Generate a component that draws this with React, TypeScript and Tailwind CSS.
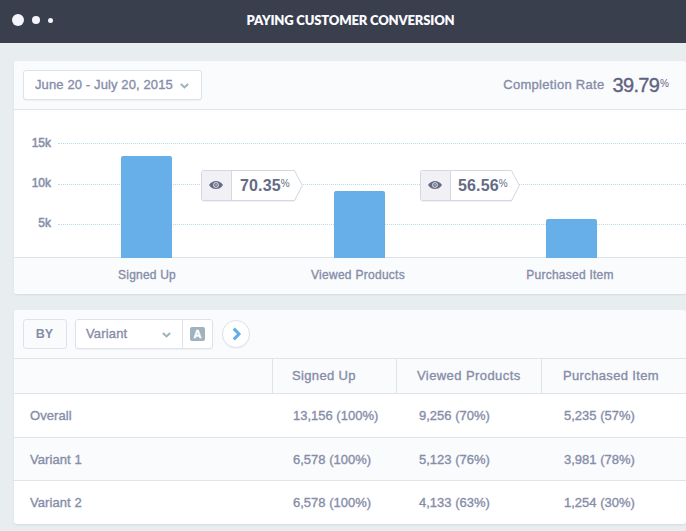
import React from 'react';

const SANS = "font-['Liberation_Sans',Arial,sans-serif]";

function Chevron({ className = '' }: { className?: string }) {
  return (
    <svg width="9" height="6" viewBox="0 0 9 6" className={`shrink-0 ${className}`} fill="none">
      <path d="M0.9 1.1 L4.5 4.4 L8.1 1.1" stroke="#9fb1bd" strokeWidth="2.1" />
    </svg>
  );
}

function Eye() {
  return (
    <svg width="14" height="10" viewBox="0 0 14 10" className="-mt-px">
      <path d="M0 5 C2.2 2 4.4 1 7 1 C9.6 1 11.8 2 14 5 C11.8 8 9.6 9 7 9 C4.4 9 2.2 8 0 5Z" fill="#646b86" />
      <circle cx="7" cy="5" r="2.7" fill="#f0f0f5" />
      <circle cx="7" cy="5" r="1.9" fill="#646b86" />
      <circle cx="7.1" cy="4.9" r="0.7" fill="#f0f0f5" />
    </svg>
  );
}

function RateBadge({ value, width, className, inset }: { value: string; width: number; className: string; inset: string }) {
  const tip = width - 0.7;
  const shoulder = width - 8.5;
  return (
    <div className={`absolute top-[60px] flex h-[32px] ${className}`}>
      <svg width={width} height="34" className="absolute left-0 top-0 overflow-visible">
        <path
          d={`M3 1.5 H${shoulder} L${tip} 16.5 L${shoulder} 32 H3 Q0 32 0 29 V3 Q0.5 0.5 3 0.5Z`}
          fill="#e9ebf0"
          opacity="0.7"
        />
        <path
          d={`M2.5 0.5 H${shoulder} L${tip} 15.5 L${shoulder} 30.5 H2.5 Q0.5 30.5 0.5 28.5 V2.5 Q0.5 0.5 2.5 0.5Z`}
          fill="#fff"
          stroke="#d5d7e3"
        />
        <path d="M2.5 1 H30 V30 H2.5 Q1 30 1 28.5 V2.5 Q1 1 2.5 1Z" fill="#f0f0f5" />
        <path d="M30.5 0.5 V30.5" stroke="#d5d7e3" />
      </svg>
      <div className="relative flex h-[31px] w-[31px] items-center justify-center pr-px">
        <Eye />
      </div>
      <div className={`relative flex text-[#646b86] [-webkit-text-stroke:0] ${inset}`}>
        <span className="text-[16px] font-bold leading-[31px] tracking-[0.15px]">{value}</span>
        <span className="text-[10px] leading-[28px]">%</span>
      </div>
    </div>
  );
}

const axis = [
  { label: '15k', pos: 'top-[23px]' },
  { label: '10k', pos: 'top-[63px]' },
  { label: '5k', pos: 'top-[103px]' },
];

const grid = ['top-[33px]', 'top-[74px]', 'top-[114px]'];

const bars = [
  { place: 'ml-[107px] h-[102px]' },
  { place: 'ml-[162px] h-[67px]' },
  { place: 'ml-[161px] h-[39px]' },
];

const rows = [
  { name: 'Overall', cells: ['13,156 (100%)', '9,256 (70%)', '5,235 (57%)'], style: 'h-[44px] border-b' },
  { name: 'Variant 1', cells: ['6,578 (100%)', '5,123 (76%)', '3,981 (78%)'], style: 'h-[43px] border-b bg-[#fafbfd] pt-[2px]' },
  { name: 'Variant 2', cells: ['6,578 (100%)', '4,133 (63%)', '1,254 (30%)'], style: 'h-[43px]' },
];

export default function App() {
  return (
    <div className={`h-[531px] w-[686px] overflow-hidden bg-[#e8eef0] ${SANS} text-[13px] leading-[20px] text-[#868da8]`}>
      <header className="grid h-[43px] grid-cols-[1fr_auto_1fr] items-center bg-[#3a3f4d] pb-[3px]">
        <div className="flex items-center pl-[12px]">
          <span className="size-[12px] rounded-full bg-[#f4f5fb]" />
          <span className="ml-[8px] size-[8px] rounded-full bg-[#f4f5fb]" />
          <span className="ml-[8px] size-[5px] rounded-full bg-[#f4f5fb]" />
        </div>
        <h1 className="ml-[15px] whitespace-nowrap font-[Lato,sans-serif] text-[13px] font-extrabold tracking-[-0.17px] text-[#fafbff]">
          PAYING CUSTOMER CONVERSION
        </h1>
      </header>

      <main className="flex flex-col gap-4 pl-[14px] pt-[18px] [-webkit-text-stroke:0.35px]">
        <section className="h-[233px] overflow-hidden rounded-[3px] bg-white shadow-[0_1px_2px_#d3dade]">
          <div className="flex h-[49px] items-center justify-between border-b border-[#dfe3ea] bg-[#fafbfd] pl-[9px] pr-[17px]">
            <button className="flex h-[30px] w-[179px] items-center rounded-[3px] border border-[#dfe2ec] bg-white pl-[11px] shadow-[0_1px_1px_#eef0f4]">
              <span className="whitespace-nowrap tracking-[0.12px]">June 20 - July 20, 2015</span>
              <Chevron className="ml-[7px] mt-[2px]" />
            </button>
            <div className="flex">
              <span className="tracking-[0.3px]">Completion Rate</span>
              <span className="ml-[8px] text-[20px] tracking-[-0.7px] text-[#5f6482]">39.79</span>
              <span className="ml-px text-[10px] leading-[17px] text-[#5f6482] [-webkit-text-stroke:0]">%</span>
            </div>
          </div>

          <div className="relative h-[148px] border-b border-[#dfe3ea]">
            {grid.map((top) => (
              <div key={top} className={`absolute left-[44px] right-0 border-t border-dotted border-[#b9d8e8] ${top}`} />
            ))}
            {axis.map((a) => (
              <span key={a.label} className={`absolute left-0 w-[37px] text-right text-[12px] [-webkit-text-stroke:0.5px] ${a.pos}`}>
                {a.label}
              </span>
            ))}
            <div className="relative flex h-[148px] items-end">
              {bars.map((b) => (
                <div key={b.place} className={`w-[51px] rounded-t-[2px] bg-[#66afe9] ${b.place}`} />
              ))}
            </div>
            <RateBadge value="70.35" width={102} className="left-[187px]" inset="pl-[8px]" />
            <RateBadge value="56.56" width={100} className="left-[406px]" inset="pl-[7px]" />
          </div>

          <div className="flex h-[36px] items-center bg-[#fafbfd] pb-[2px] text-[12px]">
            <span className="ml-[33px] w-[200px] text-center tracking-[0.2px]">Signed Up</span>
            <span className="ml-[11px] w-[200px] text-center tracking-[0.28px]">Viewed Products</span>
            <span className="ml-[12px] w-[200px] text-center tracking-[0.24px]">Purchased Item</span>
          </div>
        </section>

        <section className="h-[214px] overflow-hidden rounded-[3px] bg-white shadow-[0_1px_2px_#d3dade]">
          <div className="flex h-[49px] items-center border-b border-[#dfe3ea] bg-[#fafbfd] pl-[9px]">
            <div className="flex h-[30px] w-[44px] items-center justify-center rounded-[3px] border border-[#dfe2ec] pr-px text-[12.5px] font-bold [-webkit-text-stroke:0]">
              BY
            </div>
            <div className="ml-[8px] flex h-[30px] w-[138px] rounded-[3px] border border-[#dfe2ec] bg-white shadow-[0_1px_1px_#eef0f4]">
              <div className="flex w-[107px] items-center justify-between border-r border-[#dfe2ec] pl-[10px] pr-[11px]">
                <span className="tracking-[0.15px]">Variant</span>
                <Chevron className="mt-[2px]" />
              </div>
              <div className="flex flex-1 items-center pl-[7px]">
                <span className="flex h-[14px] w-[15px] items-center justify-center rounded-[2px] bg-[#a1b2be] text-[11px] font-bold leading-[14px] text-white">
                  A
                </span>
              </div>
            </div>
            <div className="ml-[9px] flex size-[28px] items-center justify-center rounded-full border border-[#dfe2ec] bg-white shadow-[0_1px_1px_#eef0f4]">
              <svg width="10" height="14" viewBox="0 0 10 14" fill="none" className="ml-[2px]">
                <path d="M1.8 1.6 L7 7 L1.8 12.4" stroke="#5fade9" strokeWidth="3" />
              </svg>
            </div>
          </div>

          <div className="grid h-[35px] grid-cols-[258px_124px_145px_145px] border-b border-[#dfe3ea] bg-[#fafbfd] leading-[34px]">
            <span />
            <span className="border-l border-[#dfe3ea] pl-[19px] tracking-[0.35px]">Signed Up</span>
            <span className="border-l border-[#dfe3ea] pl-[20px] tracking-[0.42px]">Viewed Products</span>
            <span className="border-l border-[#dfe3ea] pl-[21px] tracking-[0.35px]">Purchased Item</span>
          </div>

          {rows.map((r) => (
            <div key={r.name} className={`grid grid-cols-[279px_126px_145px_122px] items-center border-[#dfe3ea] ${r.style}`}>
              <span className="pl-[16px] tracking-[0.08px]">{r.name}</span>
              {r.cells.map((c) => (
                <span key={c}>{c}</span>
              ))}
            </div>
          ))}
        </section>
      </main>
    </div>
  );
}
